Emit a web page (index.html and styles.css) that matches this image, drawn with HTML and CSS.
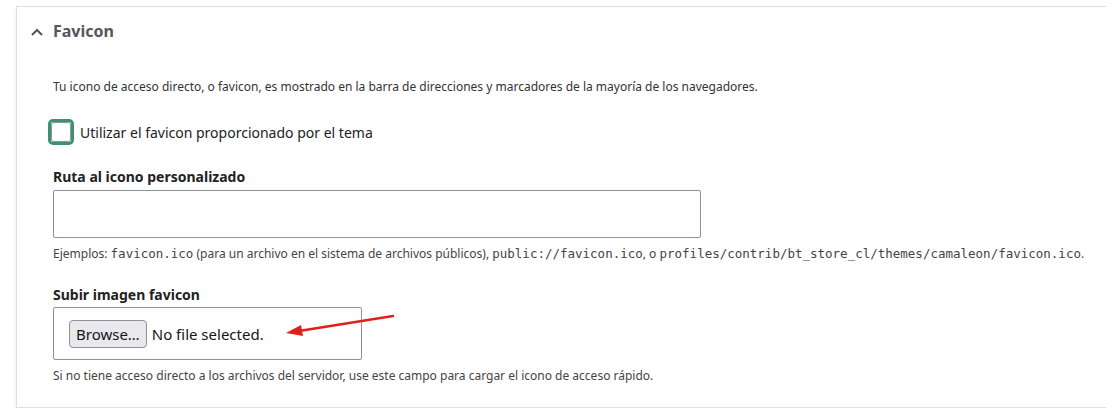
FILE: index.html
```html
<!DOCTYPE html>
<html lang="es">
<head>
    <meta charset="UTF-8">
    <meta name="viewport" content="width=device-width, initial-scale=1.0">
    <title>Favicon</title>
    <link rel="stylesheet" href="styles.css">
</head>
<body>
    <details class="panel" open>
        <summary class="panel-title">
            <svg class="chevron" width="14" height="10" viewBox="0 0 14 10">
                <path d="M2 8 L7 3 L12 8" fill="none" stroke="#55565b" stroke-width="2"/>
            </svg>
            Favicon
        </summary>

        <div class="panel-body">
            <p class="intro">Tu icono de acceso directo, o favicon, es mostrado en la barra de direcciones y marcadores de la mayoría de los navegadores.</p>

            <label class="check">
                <span class="check-ring"><span class="check-box"></span></span>
                Utilizar el favicon proporcionado por el tema
            </label>

            <div class="field">
                <label class="field-label">Ruta al icono personalizado</label>
                <input type="text" class="text-input">
                <div class="field-help">Ejemplos: <code>favicon.ico</code> (para un archivo en el sistema de archivos públicos), <code>public://favicon.ico</code>, o <code>profiles/contrib/bt_store_cl/themes/camaleon/favicon.ico</code>.</div>
            </div>

            <div class="field">
                <label class="field-label upload-label">Subir imagen favicon</label>
                <div class="file-wrap">
                    <div class="file-input">
                        <span class="browse">Browse…</span>
                        <span class="file-name">No file selected.</span>
                    </div>
                    <svg class="arrow" width="120" height="30" viewBox="0 0 120 30">
                        <path d="M112 4 L18 19" fill="none" stroke="#e0201c" stroke-width="2.5" stroke-linecap="round"/>
                        <path d="M5 21 L20 13 L22 24 Z" fill="#e0201c"/>
                    </svg>
                </div>
                <div class="field-help">Si no tiene acceso directo a los archivos del servidor, use este campo para cargar el icono de acceso rápido.</div>
            </div>
        </div>
    </details>
</body>
</html>
```

FILE: styles.css
```css
* {
    margin: 0;
    padding: 0;
    box-sizing: border-box;
}

body {
    font-family: 'Noto Sans', 'Open Sans', sans-serif;
    background: #fff;
    color: #222330;
    padding: 6px 0 0 16px;
    overflow: hidden;
}

.panel {
    width: 1100px;
    height: 402px;
    border: 1px solid #dedfe4;
    border-right: none;
    background: #fff;
    box-shadow: 0 2px 4px rgba(0, 0, 0, 0.08);
}

.panel-title {
    list-style: none;
    display: flex;
    align-items: center;
    gap: 9px;
    padding: 0 0 0 13px;
    height: 48px;
    font-size: 16px;
    font-weight: 700;
    color: #55565b;
    cursor: pointer;
}

.panel-title::-webkit-details-marker {
    display: none;
}

.chevron {
    margin-top: 1px;
}

.panel-body {
    padding: 23px 0 0 36px;
}

.intro {
    font-size: 12px;
    line-height: 18px;
    color: #333;
}

.check {
    display: flex;
    align-items: center;
    gap: 6px;
    margin: 23px 0 0 -5px;
    font-size: 14px;
    color: #222;
}

.check-ring {
    width: 26px;
    height: 26px;
    border: 3px solid #3b9170;
    border-radius: 5px;
    display: flex;
    align-items: center;
    justify-content: center;
}

.check-box {
    width: 20px;
    height: 20px;
    border: 1px solid #8e929c;
    border-radius: 3px;
    background: #fff;
}

.field {
    margin-top: 22px;
}

.field-label {
    display: block;
    font-size: 14px;
    font-weight: 700;
    line-height: 20px;
    color: #222;
    margin-bottom: 3px;
}

.upload-label {
    margin-bottom: 2px;
}

.text-input {
    display: block;
    width: 648px;
    height: 48px;
    border: 1px solid #8e929c;
    border-radius: 2px;
    background: #fff;
}

.field-help {
    font-size: 12px;
    line-height: 18px;
    color: #444;
    margin-top: 7px;
}

.field-help code {
    font-family: 'DejaVu Sans Mono', monospace;
    font-size: 12.5px;
}

.file-wrap {
    display: flex;
    align-items: flex-start;
}

.file-input {
    width: 309px;
    height: 53px;
    border: 1px solid #8e929c;
    border-radius: 2px;
    display: flex;
    align-items: center;
    gap: 5px;
    padding-left: 15px;
    font-size: 15px;
    color: #15141a;
}

.browse {
    background: #e9e9ed;
    border: 1px solid #8f8f9d;
    border-radius: 4px;
    padding: 3px 6px;
    line-height: 20px;
}

.arrow {
    margin: 5px 0 0 -81px;
}
```
